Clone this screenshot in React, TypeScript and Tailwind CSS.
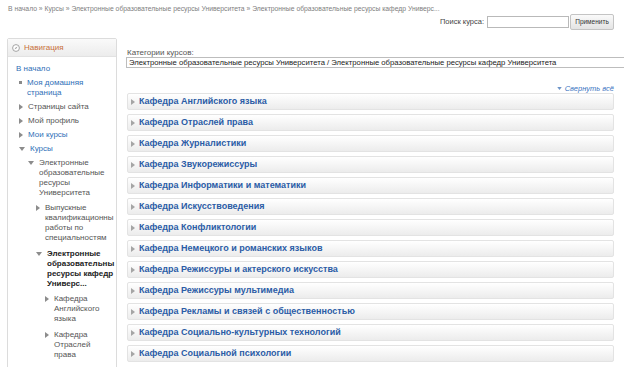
const categories = [
  "Кафедра Английского языка",
  "Кафедра Отраслей права",
  "Кафедра Журналистики",
  "Кафедра Звукорежиссуры",
  "Кафедра Информатики и математики",
  "Кафедра Искусствоведения",
  "Кафедра Конфликтологии",
  "Кафедра Немецкого и романских языков",
  "Кафедра Режиссуры и актерского искусства",
  "Кафедра Режиссуры мультимедиа",
  "Кафедра Рекламы и связей с общественностью",
  "Кафедра Социально-культурных технологий",
  "Кафедра Социальной психологии",
];

type NavItem = {
  lines: string[];
  level: number;
  icon: "dot" | "right" | "down";
  tone: "link" | "plain" | "current";
};

const navItems: NavItem[] = [
  { lines: ["Моя домашняя", "страница"], level: 1, icon: "dot", tone: "link" },
  { lines: ["Страницы сайта"], level: 1, icon: "right", tone: "plain" },
  { lines: ["Мой профиль"], level: 1, icon: "right", tone: "plain" },
  { lines: ["Мои курсы"], level: 1, icon: "right", tone: "link" },
  { lines: ["Курсы"], level: 1, icon: "down", tone: "link" },
  { lines: ["Электронные", "образовательные", "ресурсы", "Университета"], level: 2, icon: "down", tone: "plain" },
  { lines: ["Выпускные", "квалификационны", "работы по", "специальностям"], level: 3, icon: "right", tone: "plain" },
  { lines: ["Электронные", "образовательны", "ресурсы кафедр", "Универс..."], level: 3, icon: "down", tone: "current" },
  { lines: ["Кафедра", "Английского", "языка"], level: 4, icon: "right", tone: "plain" },
  { lines: ["Кафедра", "Отраслей", "права"], level: 4, icon: "right", tone: "plain" },
  { lines: ["Кафедра", "Журналистики"], level: 4, icon: "right", tone: "plain" },
];

// deeper levels sit a little further apart in the reference
const indent: Record<number, string> = {
  1: "pl-[11px]",
  2: "pl-[20px]",
  3: "mt-[1.5px] pl-[28px]",
  4: "mt-[1.5px] pl-[37px]",
};

function Marker({ icon }: { icon: NavItem["icon"] }) {
  if (icon === "dot") return <span className="mt-[3.5px] h-[3px] w-[3px] shrink-0 bg-[#8a8a8a]" />;
  if (icon === "right")
    return (
      <svg width="4" height="6" viewBox="0 0 4 6" className="mt-[2px] shrink-0">
        <path d="M0 0 L4 3 L0 6 Z" fill="#8c8c8c" />
      </svg>
    );
  return (
    <svg width="6" height="4" viewBox="0 0 6 4" className="mt-[3px] shrink-0">
      <path d="M0 0 L6 0 L3 4 Z" fill="#8c8c8c" />
    </svg>
  );
}

function Navigation() {
  return (
    <aside className="flex w-[110px] shrink-0 flex-col self-stretch rounded-t-[2px] border border-[#dcdcdc]">
      <div className="flex h-[18px] shrink-0 items-center gap-[4px] border-b border-[#e2e2e2] bg-gradient-to-b from-[#fafafa] to-[#ececec] pl-[4px]">
        <svg width="8" height="8" viewBox="0 0 8 8">
          <circle cx="4" cy="4" r="3.4" fill="#fff" stroke="#9a9a9a" strokeWidth="0.9" />
          <path d="M5.6 2.4 L4.4 4.4 L2.4 5.6 L3.6 3.6 Z" fill="#a0a0a0" />
        </svg>
        <span className="text-[8px] text-[#c8703a]">Навигация</span>
      </div>
      <div className="flex flex-1 flex-col gap-[4px] overflow-hidden bg-white pr-[2px] pt-[6.5px] text-[8px] leading-[10px]">
        <div className="pl-[8px] text-[#2f6fb7]">В начало</div>
        {navItems.map((item) => (
          <div key={item.lines.join(" ")} className={`flex gap-[5px] ${indent[item.level]}`}>
            <Marker icon={item.icon} />
            <span
              className={`whitespace-nowrap ${
                item.tone === "link"
                  ? "text-[#2f6fb7]"
                  : item.tone === "current"
                  ? "font-bold text-[#222]"
                  : "text-[#555]"
              }`}
            >
              {item.lines.map((l) => (
                <span key={l} className="block">
                  {l}
                </span>
              ))}
            </span>
          </div>
        ))}
      </div>
    </aside>
  );
}

function CategoryRow({ name }: { name: string }) {
  return (
    <div className="flex h-[17px] items-center gap-[4px] rounded-[2px] border border-[#e3e3e3] bg-gradient-to-b from-[#ffffff] to-[#ececec] pl-[3px]">
      <svg width="4" height="6" viewBox="0 0 4 6">
        <path d="M0 0 L4 3 L0 6 Z" fill="#a5a5a5" />
      </svg>
      <span className="text-[9px] font-bold text-[#2b5ca6]">{name}</span>
    </div>
  );
}

export default function App() {
  return (
    <div className="h-[367px] w-[624px] overflow-hidden bg-white font-['Liberation_Sans',Arial,sans-serif]">
      <div className="flex flex-col pl-[8px] pr-[10px] pt-[4px]">
        <div className="whitespace-nowrap text-[6.8px] leading-[9px] text-[#808080]">
          В начало » Курсы » Электронные образовательные ресурсы Университета » Электронные образовательные ресурсы
          кафедр Универс...
        </div>
        <div className="mt-[1px] flex items-center justify-end">
          <span className="mr-[3px] text-[7.5px] text-[#444]">Поиск курса:</span>
          <div className="h-[12px] w-[82px] border border-[#b9b9b9] bg-white" />
          <button className="ml-[1px] h-[16px] w-[44px] rounded-[2px] border border-[#c4c4c4] bg-gradient-to-b from-[#fafafa] to-[#e4e4e4] text-[6.5px] text-[#333]">
            Применить
          </button>
        </div>
      </div>
      <div className="mt-[8px] flex h-[330px] gap-[9px] pl-[7px]">
        <Navigation />
        <main className="flex min-w-0 flex-1 flex-col pt-[10px]">
          <div className="pl-[1px] text-[8px] leading-[9px] text-[#555]">Категории курсов:</div>
          <div className="w-[520px] whitespace-nowrap border border-[#bdbdbd] bg-white pl-[2px] text-[7.7px] leading-[9px] text-[#222]">
            Электронные образовательные ресурсы Университета / Электронные образовательные ресурсы кафедр Университета
          </div>
          <div className="mr-[10px] mt-[16px] flex items-center justify-end gap-[3px] text-[7.5px] leading-[9px] italic text-[#3a74bf]">
            <svg width="5" height="3" viewBox="0 0 6 4">
              <path d="M0 0 L6 0 L3 4 Z" fill="#6d94c8" />
            </svg>
            Свернуть всё
          </div>
          <div className="mr-[10px] flex flex-col gap-[4px] pl-[1px]">
            {categories.map((c) => (
              <CategoryRow key={c} name={c} />
            ))}
          </div>
        </main>
      </div>
    </div>
  );
}
